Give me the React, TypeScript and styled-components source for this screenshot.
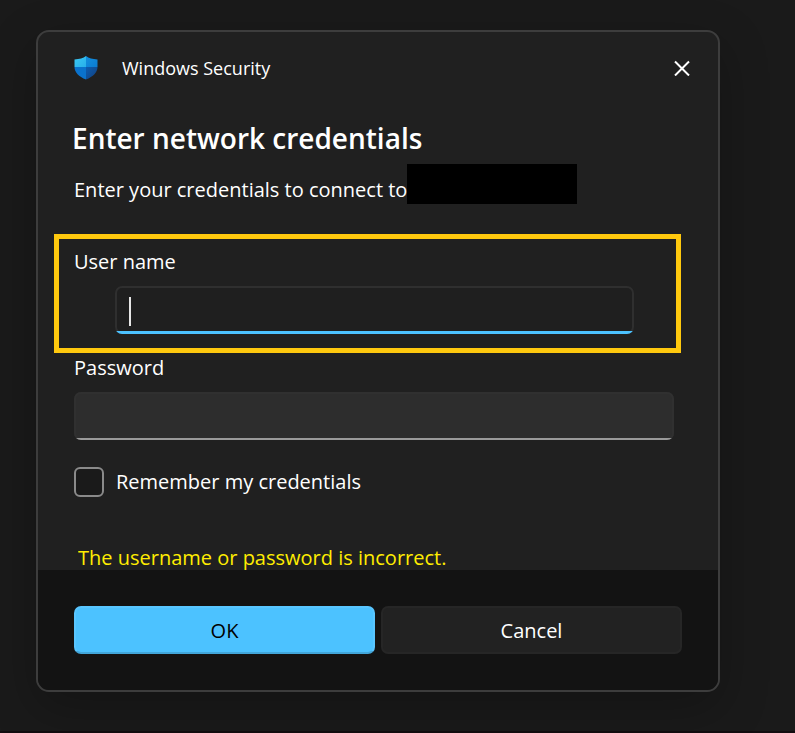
import React, { useState } from "react";
import styled, { createGlobalStyle, css } from "styled-components";

const GlobalStyle = createGlobalStyle`
  *, *::before, *::after { box-sizing: border-box; }
  html, body { margin: 0; background: #1a1a1a; }
  body, button, input {
    font-family: "Open Sans", "Noto Sans", sans-serif;
    font-size: 20px;
    line-height: 28px;
  }
`;

const Desktop = styled.main`
  min-height: 100vh;
  padding: 30px 75px 39px 36px;
  background: #1a1a1a;
  border-bottom: 2px solid #120d10;
  color: #ffffff;
`;

const Dialog = styled.form`
  background: #202020;
  border: 2px solid #3d3d3d;
  border-radius: 13px;
  overflow: hidden;
  box-shadow: 0 16px 48px rgba(0, 0, 0, 0.25);
`;

const TitleBar = styled.header`
  display: flex;
  align-items: center;
  height: 72px;
  padding: 0 20px 0 34px;
`;

const AppName = styled.span`
  flex: 1;
  margin-left: 22px;
  font-size: 18px;
`;

const CloseButton = styled.button`
  display: grid;
  place-items: center;
  width: 32px;
  height: 32px;
  padding: 0;
  border: 0;
  background: transparent;
  color: #ffffff;
`;

const Heading = styled.h1`
  margin: 16px 34px 0;
  font-size: 28px;
  font-weight: 600;
  line-height: 36px;
`;

const Message = styled.p`
  display: flex;
  align-items: flex-end;
  margin: 8px 36px 0;
`;

const Redacted = styled.span`
  width: 170px;
  height: 40px;
  background: #000000;
`;

const Highlight = styled.section`
  margin: 30px 37px 0 16px;
  padding: 9px 15px 14px;
  border: 5px solid #ffc90e;
`;

const Label = styled.label`
  display: block;
  margin-bottom: 10px;
`;

const InputFrame = styled.div<{ $active?: boolean }>`
  position: relative;
  height: 48px;
  border-radius: 7px;
  overflow: hidden;
  background: ${(p) => (p.$active ? "#1f1f1f" : "#2d2d2d")};
  box-shadow: inset 0 0 0 2px ${(p) => (p.$active ? "#2f2f2f" : "#303030")};

  ${(p) =>
    p.$active &&
    css`
      margin: 0 27px 0 41px;
    `}

  &::after {
    content: "";
    position: absolute;
    left: 0;
    right: 0;
    bottom: 0;
    height: ${(p) => (p.$active ? "3px" : "2px")};
    background: ${(p) => (p.$active ? "#4cc2ff" : "#9a9a9a")};
  }
`;

const TextInput = styled.input`
  display: block;
  width: 100%;
  height: 100%;
  padding: 0 14px;
  border: 0;
  outline: 0;
  background: transparent;
  color: #ffffff;
  caret-color: transparent;
`;

const Caret = styled.span`
  position: absolute;
  left: 14px;
  top: 11px;
  width: 2px;
  height: 29px;
  background: #e6e6e6;
  pointer-events: none;
`;

const PasswordField = styled.div`
  margin: 1px 44px 0 36px;
`;

const Remember = styled.label`
  display: flex;
  align-items: center;
  gap: 12px;
  margin: 27px 36px 0;
`;

const Checkbox = styled.input`
  appearance: none;
  width: 30px;
  height: 30px;
  margin: 0;
  border: 2px solid #8a8a8a;
  border-radius: 6px;
  background: #1a1a1a;

  &:checked {
    background: #4cc2ff;
  }
`;

const ErrorText = styled.p`
  height: 26px;
  margin: 47px 36px 0 40px;
  overflow: hidden;
  color: #ffed00;
`;

const Footer = styled.footer`
  display: grid;
  grid-template-columns: 1fr 1fr;
  gap: 6px;
  padding: 36px;
  background: #131313;
`;

const ActionButton = styled.button<{ $primary?: boolean }>`
  height: 48px;
  padding: 2px 0 0;
  border: 2px solid ${(p) => (p.$primary ? "#59c6ff" : "#262626")};
  border-bottom-color: ${(p) => (p.$primary ? "#42a6da" : "#262626")};
  border-radius: 7px;
  background: ${(p) => (p.$primary ? "#4cc2ff" : "#222222")};
  color: ${(p) => (p.$primary ? "#000000" : "#ffffff")};
`;

const Shield = () => (
  <svg width="28" height="28" viewBox="0 0 28 28" aria-hidden="true">
    <defs>
      <clipPath id="shield">
        <path d="M14 2 C16.8 4.2 20.5 5.2 25.5 5.4 V13 C25.500 18.400 21.200 22.600 14 25.600 C6.800 22.600 2.500 18.400 2.500 13 V5.400 C7.500 5.200 11.200 4.200 14 2Z" />
      </clipPath>
      <linearGradient id="sky" x1="0" y1="0" x2="1" y2="1">
        <stop offset="0" stopColor="#3ccbf4" />
        <stop offset="1" stopColor="#28afea" />
      </linearGradient>
      <linearGradient id="azure" x1="0" y1="0" x2="1" y2="1">
        <stop offset="0" stopColor="#1490df" />
        <stop offset="1" stopColor="#0a7bd2" />
      </linearGradient>
      <linearGradient id="navy" x1="0" y1="0" x2="1" y2="1">
        <stop offset="0" stopColor="#0d5cb0" />
        <stop offset="1" stopColor="#123f7c" />
      </linearGradient>
    </defs>
    <g clipPath="url(#shield)">
      <path d="M2 1h12v12H2z" fill="url(#sky)" />
      <path d="M14 1h12v12H14z" fill="url(#azure)" />
      <path d="M2 13h12v13H2z" fill="#0a72cc" />
      <path d="M14 13h12v13H14z" fill="url(#navy)" />
    </g>
  </svg>
);

export default function App() {
  const [user, setUser] = useState("");
  return (
    <>
      <GlobalStyle />
      <Desktop>
        <Dialog onSubmit={(e) => e.preventDefault()}>
          <TitleBar>
            <Shield />
            <AppName>Windows Security</AppName>
            <CloseButton type="button" aria-label="Close">
              <svg width="16" height="16" viewBox="0 0 16 16" aria-hidden="true">
                <path d="M1 1.500L15 15.500M15 1.500L1 15.500" stroke="currentColor" strokeWidth="2" />
              </svg>
            </CloseButton>
          </TitleBar>
          <Heading>Enter network credentials</Heading>
          <Message>
            Enter your credentials to connect to
            <Redacted />
          </Message>
          <Highlight>
            <Label htmlFor="user">User name</Label>
            <InputFrame $active>
              <TextInput
                id="user"
                type="text"
                value={user}
                onChange={(e) => setUser(e.target.value)}
              />
              {user === "" && <Caret />}
            </InputFrame>
          </Highlight>
          <PasswordField>
            <Label htmlFor="password">Password</Label>
            <InputFrame>
              <TextInput id="password" type="password" />
            </InputFrame>
          </PasswordField>
          <Remember>
            <Checkbox type="checkbox" />
            Remember my credentials
          </Remember>
          <ErrorText role="alert">The username or password is incorrect.</ErrorText>
          <Footer>
            <ActionButton type="submit" $primary>
              OK
            </ActionButton>
            <ActionButton type="button">Cancel</ActionButton>
          </Footer>
        </Dialog>
      </Desktop>
    </>
  );
}
